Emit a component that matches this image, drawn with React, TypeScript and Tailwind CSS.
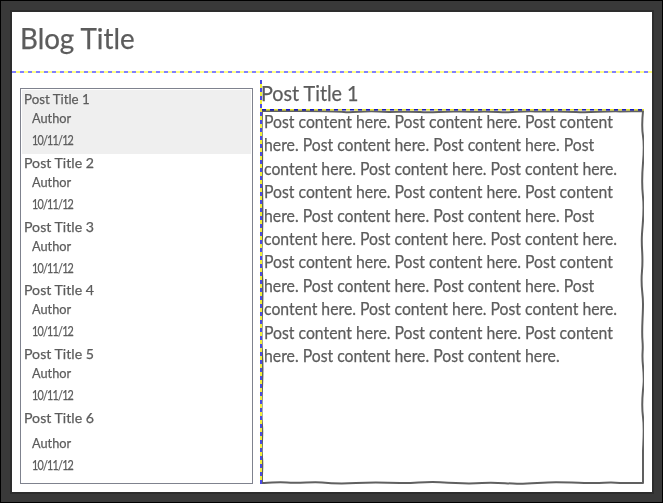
const posts = [1, 2, 3, 4, 5, 6];

const lines = [
  'Post content here. Post content here. Post content',
  'here. Post content here. Post content here. Post',
  'content here. Post content here. Post content here.',
  'Post content here. Post content here. Post content',
  'here. Post content here. Post content here. Post',
  'content here. Post content here. Post content here.',
  'Post content here. Post content here. Post content',
  'here. Post content here. Post content here. Post',
  'content here. Post content here. Post content here.',
  'Post content here. Post content here. Post content',
  'here. Post content here. Post content here.',
];

function PostItem({ n }: { n: number }) {
  const last = n === 6;
  return (
    <li className={`h-[63.8px] shrink-0 whitespace-nowrap pl-[2px] ${n === 1 ? 'bg-[#efefef]' : ''}`}>
      <div className={`h-[18px] w-max origin-left text-[14px] leading-[17px] ${n === 1 ? 'scale-x-[0.95]' : 'scale-x-[1.01]'}`}>Post Title {n}</div>
      <div className={`pl-2 text-[14px] leading-[22px] ${last ? 'pt-[6px]' : ''}`}>
        <div className="-mt-px w-max origin-left scale-x-[0.91]">Author</div>
        <div className="w-max origin-left scale-x-[0.77] tracking-[-1px]">10/11/12</div>
      </div>
    </li>
  );
}

/* Hand-drawn outline of the content box */
function SketchFrame() {
  return (
    <svg className="pointer-events-none absolute inset-0" width="384" height="376" viewBox="0 0 384 376" fill="none" stroke="#606060" strokeWidth="2" strokeLinejoin="round">
      <path d="M2 2 C20 2 30 2 45 2 S75 2 84 3 S105 1.5 118 2.6 S145 2 160 3 S180 2 200 2.6 S220 2 238 3 S255 2 275 2.4 S300 2 316 3 S340 2 360 2.4 L383 2 C382 12 381.5 18 383 27 S384 42 383 54 S381.5 75 383 88 S383 110 382 125 S383.5 145 382 162 S383 182 383 195 S381.5 220 382.5 232 S381.5 242 383 257 S384 270 383 281 S381.5 297 383 308 S383.5 330 383 342 L383 374 L360 374 C350 373 345 374 335 374 S310 373.2 296 373.2 S270 375 257 374.7 S235 373 222 374 S195 374.3 180 373.3 S155 374.5 140 374 S110 373.3 96 374 S72 374.5 62 373.4 S40 374.5 27 373.4 S12 374.4 2 374 C1.5 364 3 358 2 348 S3 327 2 316 S1.5 293 2 279 S3 260 2 244 S1.5 220 2 204 S3 180 2 164 S1.5 142 2 127 S2.7 98 2 80 S2.6 55 2 40 S1.5 18 2 2Z" />
    </svg>
  );
}

export default function App() {
  return (
    <div className="h-[503px] w-[663px] overflow-hidden border border-black bg-[#393939] p-[9px] font-['Buxton_Sketch','Lato',sans-serif] text-[#5c5c5c] [-webkit-text-stroke:0.25px_#5c5c5c]">
      <main className="flex h-[484px] w-[644px] flex-col border-2 border-[#2d2d2d] bg-white">
        <header className="h-[59px] shrink-0 pl-[8px] pt-[7px]">
          <h1 className="w-max origin-left scale-x-[0.99] text-[28px] leading-[38px]">Blog Title</h1>
        </header>
        <div className="h-[2px] shrink-0 bg-[repeating-linear-gradient(90deg,#8080ff_0_4px,#ffff80_4px_8px)]" />
        <div className="flex min-h-0 flex-1 pl-2">
          <ul className="mt-[15px] flex h-[396px] w-[233px] shrink-0 flex-col border border-[#7f828e] p-px">
            {posts.map((n) => <PostItem key={n} n={n} />)}
          </ul>
          <section className="relative ml-[7px] mt-[7px] h-[404px] w-[384px]">
            <h2 className="h-[29px] w-max origin-left scale-x-[0.94] pl-px text-[21px] leading-[26px]">Post Title 1</h2>
            <div className="relative h-[375px] pl-[4px] text-[17px]">
              <SketchFrame />
              <div className="relative">
                {lines.map((line, i) => (
                  <p key={i} className="h-[23.4px] w-max origin-left scale-x-[0.928] whitespace-nowrap leading-[25px]">{line}</p>
                ))}
              </div>
              <div className="absolute left-[2px] top-0 h-[2px] w-[382px] bg-[repeating-linear-gradient(90deg,#1818c0_0_4px,#e0e030_4px_8px)] [mask-image:linear-gradient(#000_50%,#0008_50%)]" />
            </div>
            <div className="absolute left-0 top-0 h-[404px] w-[2px] bg-[repeating-linear-gradient(180deg,#4848e8_0_4px,#f0f038_4px_8px)]" />
          </section>
        </div>
      </main>
    </div>
  );
}
